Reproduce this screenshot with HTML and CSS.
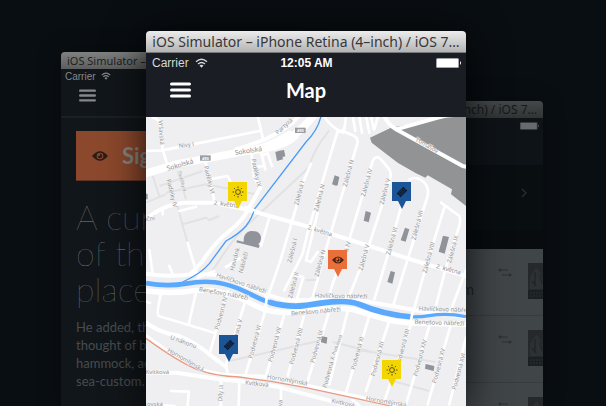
FILE: index.html
```html
<!DOCTYPE html>
<html lang="en">
<head>
<meta charset="utf-8">
<meta name="viewport" content="width=device-width, initial-scale=1">
<title>Map</title>
<link rel="stylesheet" href="styles.css">
</head>
<body>
<svg width="0" height="0" class="defs" aria-hidden="true">
  <symbol id="wifi" viewBox="0 0 14 11"><path d="M1 4.2Q7-1.2 13 4.2M3.2 6.6Q7 3.2 10.8 6.6" fill="none" stroke="currentColor" stroke-width="1.6"/><path d="M4.8 8.2Q7 6.4 9.2 8.2L7 10.6z" fill="currentColor"/></symbol>
  <symbol id="battery" viewBox="0 0 25 10"><rect width="23" height="10" rx="1.5" fill="currentColor" opacity=".6"/><rect x="1" y="1" width="21" height="8" rx=".5" fill="currentColor"/><path d="M24 3q2 2 0 4z" fill="currentColor"/></symbol>
  <symbol id="menu" viewBox="0 0 21 16"><path d="M1.5 2h18M1.5 8h18M1.5 14h18" stroke="currentColor" stroke-width="3" stroke-linecap="round"/></symbol>
  <symbol id="eye" viewBox="0 0 16 10"><path d="M0 5Q8-4.6 16 5Q8 14.6 0 5z" fill="currentColor"/><circle cx="8" cy="5" r="3.3" fill="var(--hole)"/><circle cx="8" cy="5" r="2.2" fill="currentColor"/><path d="M8 5V2.8A2.2 2.2 0 0 0 5.8 5z" fill="var(--hole)"/></symbol>
  <symbol id="sun" viewBox="0 0 12 12"><circle cx="6" cy="6" r="2.4" fill="none" stroke="currentColor"/><path d="M6 .5v1.6M6 9.9v1.6M.5 6h1.6M9.9 6h1.6M2.1 2.1l1.1 1.1M8.8 8.8l1.1 1.1M2.1 9.9l1.1-1.1M8.8 3.2l1.1-1.1" stroke="currentColor"/></symbol>
  <symbol id="ticket" viewBox="0 0 12 12"><g transform="rotate(-45 6 6)"><path d="M1.2 3.2h9.6v1.9a1 1 0 0 0 0 1.8v1.9H1.2V6.9a1 1 0 0 0 0-1.8z" fill="currentColor"/><path d="M3.4 4.5h5.2v3H3.4zM4.7 6h2.6" fill="none" stroke="#1b5497" stroke-width=".4"/></g></symbol>
  <symbol id="swap" viewBox="0 0 14 9"><path d="M2 2h8M4 7h8" stroke="currentColor"/><path d="M0 2l3-2v4zM14 7l-3-2v4z" fill="currentColor"/></symbol>
  <symbol id="portrait" viewBox="0 0 27 36"><rect width="27" height="36" fill="#25292c"/><path d="M2 26Q1 12 6 8q3-6 5 0 5 5 4 18zM15 26q-1-14 4-18 4-4 6 2l2 16z" fill="#2c3134"/><path d="M7 9v14M19 9v13M4 18l4 5M12 12l2 9" stroke="#222629" stroke-width="1.5"/><path d="M0 27h27v9H0z" fill="#1b2023"/><path d="M2 30h23M2 33h20" stroke="#2a2f32" stroke-dasharray="2 1"/></symbol>
</svg>
<main class="desktop">

  <section class="sim sim-left">
    <div class="titlebar"><span>iOS Simulator – iPhone</span></div>
    <header class="head">
      <div class="status"><span>Carrier</span><svg class="wifi"><use href="#wifi"/></svg></div>
      <button class="menu" aria-label="Menu"><svg><use href="#menu"/></svg></button>
    </header>
    <div class="article">
      <button class="sign"><svg class="eye"><use href="#eye"/></svg>Sign in</button>
      <h2>A cur<br>of the<br>place</h2>
      <p>He added, the<br>thought of by<br>hammock, act<br>sea-custom.</p>
    </div>
  </section>

  <section class="sim sim-right">
    <div class="titlebar"><span>(4–inch) / iOS 7…</span></div>
    <header class="head"><div class="status"><svg class="battery"><use href="#battery"/></svg></div></header>
    <div class="feature"><svg class="chevron" viewBox="0 0 6 10"><path d="M1 1l4 4-4 4" fill="none" stroke="currentColor" stroke-width="1.5"/></svg></div>
    <ul class="list">
      <li><span class="name">m</span><svg class="swap"><use href="#swap"/></svg><svg class="portrait"><use href="#portrait"/></svg></li>
      <li><svg class="swap"><use href="#swap"/></svg><svg class="portrait"><use href="#portrait"/></svg></li>
      <li><svg class="swap"><use href="#swap"/></svg><svg class="portrait"><use href="#portrait"/></svg></li>
    </ul>
  </section>

  <section class="sim sim-main">
    <div class="titlebar"><span>iOS Simulator – iPhone Retina (4–inch) / iOS 7…</span></div>
    <header class="head">
      <div class="status"><span class="carrier">Carrier<svg class="wifi"><use href="#wifi"/></svg></span><span class="time">12:05 AM</span><svg class="battery"><use href="#battery"/></svg></div>
      <div class="nav"><button class="menu" aria-label="Menu"><svg><use href="#menu"/></svg></button><h1>Map</h1></div>
    </header>
    <div class="map">
      <svg class="streets" viewBox="0 0 960 867" role="img" aria-label="Street map">
        <rect width="960" height="867" fill="#efeff1"/>
        <g class="lane">
          <path d="M20 177L40 237M40 207L170 162M95 162L120 247M60 227L180 202L330 232M0 257L60 232M95 267L110 327L125 377M110 322L180 302L190 309L220 297M250 732L480 680L530 670M560 675L700 710M640 700L870 735M740 792L850 822M480 490L510 488"/>
          <path d="M550 40Q500 100 490 150L330 300Q270 350 220 430L190 475"/>
        </g>
        <path d="M672 62L735 32L900 2L960 -3V267L915 232L918 217L845 175L838 182L810 169L755 137L677 77Z" fill="#929395"/>
        <g class="road s">
          <path d="M20 2q20 3 22 20L50 97L65 147M335 -3L350 62M0 102L50 100L340 42M175 122L190 182L205 252M190 187L245 177L255 197M315 102L325 177M345 107L358 157M350 115L365 109L378 147M325 152L350 147M50 292V277M100 282L150 269M370 302L345 387M495 140L475 187L440 307M125 377L150 462"/>
          <path d="M535 -3Q550 27 590 47M575 42L540 157L485 347M590 42L625 57Q640 67 632 87L575 277L540 397L500 540M680 132Q690 112 705 127L730 157Q738 172 730 197L665 397L605 550M680 132L610 367L560 500L545 550M790 187Q810 177 830 192Q850 207 845 237L785 427L740 570M766 267L720 432L685 547M885 257L940 297Q945 307 940 327L905 432L865 585M895 272L845 432L800 590M960 460L910 592M600 -3L595 37L573 47M620 -3L628 42M640 -3L648 47M660 -3L670 47M695 2L685 37M675 -3l8 40"/>
          <path d="M440 307L400 440L365 540M485 347L470 410L415 520M515 287L480 430L495 435L515 405M450 475L472 480L440 590M10 400L20 470M70 447L80 472M45 530Q30 592 38 597L205 647M150 527L128 622M0 554L12 558M245 522L190 712M300 547L265 657L240 742L245 772M360 532L355 592L300 767M415 592L360 777M475 592L425 777"/>
          <path d="M550 582L485 792M605 582L550 802M670 597L600 827M730 612L660 822M795 622L715 852M850 627L780 862M915 622L845 862M960 662L910 862M225 792V867M280 797L278 867M405 812V867M75 822L128 824L125 867M0 862L85 867M640 865L620 850M240 450L280 425"/>
        </g>
        <g class="road m">
          <path d="M0 307Q50 262 120 257L200 257L300 277L480 327L670 387L800 429L960 477M325 177L343 212Q330 237 310 272Q290 312 250 342T170 432L135 470M270 97Q380 67 440 17L460 -5M0 617Q40 647 100 657Q150 677 190 712L240 750M715 -3Q725 22 750 37L950 147L965 150M750 37L900 -5M0 767L90 767L220 787L300 794L400 810L480 832L630 872"/>
          <path d="M0 470Q70 482 150 470L215 474Q270 492 360 532L420 550L480 550Q580 527 680 557L740 567L820 582L960 600M0 657Q100 732 170 760Q230 777 300 777L370 780L480 805L760 867"/>
        </g>
        <path class="road l" d="M0 522Q80 532 150 520L200 520Q270 532 330 567Q370 587 430 587L480 582Q580 567 630 580Q700 602 750 614L800 618L960 622"/>
        <path class="road xl" d="M0 169L90 142L180 125L300 102Q400 87 440 57T510 -13"/>
        <path d="M230 106Q330 100 430 40L460 60Q420 105 300 113z" fill="#fff"/>
        <path class="water brook" d="M525 -2Q515 40 480 75L325 277Q320 300 300 327Q280 350 240 372L190 440Q165 470 110 495"/>
        <path class="road s" d="M155 482L205 462M300 270L345 288"/>
        <path class="water" d="M0 498Q60 510 120 500C190 487 230 498 270 512S340 550 375 557" stroke-width="14"/>
        <path class="water" d="M370 556Q430 573 480 565C540 556 600 546 640 562C700 588 750 596 800 600" stroke-width="17"/>
        <path class="water" d="M730 592Q800 605 850 596T960 599" stroke-width="10"/>
        <path d="M363 537L357 582M799 586L795 612" stroke="#fff" stroke-width="8"/>
        <path d="M0 664Q100 737 160 760Q210 777 280 780L380 794L480 812L740 868" fill="none" stroke="#e79b83" stroke-width="4"/>
        <g fill="#90939a">
          <path d="M388 105l18-5 5 27-18 5zM406 101l8-3 4 20-8 2zM0 229l5 3v15H0zM570 206l-12-4 8-27 14 5-5 25zM653 311l6-29 16 5-7 29zM764 370l13-38 13 5-11 37zM878 404l13-48 18 4-13 50zM526 658l18 3-2 19-17-4zM724 495l10-33 13 4-8 34zM837 755l2-14 26 6-2 15z"/>
          <path d="M273 370l20 5q-2-28 20-33 32-2 32 23-1 12-8 16l4 5-3 7-67-17z"/>
        </g>
        <g fill="#999da1"><rect x="162" y="115" width="32" height="16"/><rect x="447" y="32" width="32" height="16"/></g>
        <g class="shield"><text x="178" y="128">490</text><text x="463" y="45">490</text></g>
        <g class="names">
          <text transform="translate(40 47) rotate(86)">Vršavská</text>
          <text transform="translate(122 90) rotate(-8)">Nivy I</text>
          <text class="big" transform="translate(104 150) rotate(-16)">Sokolská</text>
          <text class="big" transform="translate(308 108) rotate(-8)">Sokolská</text>
          <text transform="translate(418 32) rotate(-43)">Partyzá</text>
          <text transform="translate(184 190) rotate(76)">Padělky VI</text>
          <text transform="translate(325 168) rotate(78)">Padělky IX</text>
          <text transform="translate(72 230) rotate(76)">Padělky IV</text>
          <text class="small" transform="translate(104 194) rotate(76)">Padělky V</text>
          <text transform="translate(240 268) rotate(7)">2. května</text>
          <text transform="translate(5 312) rotate(-8)">Luční</text>
          <text transform="translate(466 230) rotate(-75)">Zálešná I</text>
          <text transform="translate(526 244) rotate(-75)">Zálešná N</text>
          <text transform="translate(613 170) rotate(-75)">Zálešná N</text>
          <text transform="translate(668 198) rotate(-75)">Zálešná IV</text>
          <text transform="translate(723 225) rotate(-75)">Zálešná V</text>
          <text transform="translate(743 374) rotate(-75)">Zálešná VI</text>
          <text transform="translate(820 326) rotate(-75)">Zálešná VII</text>
          <text transform="translate(926 398) rotate(-75)">Zálešná IX</text>
          <text transform="translate(854 423) rotate(-75)">Zálešná VIII</text>
          <text transform="translate(445 402) rotate(-75)">Zálešná I</text>
          <text transform="translate(448 506) rotate(-75)">Zálešná II</text>
          <text transform="translate(528 440) rotate(-75)">Zálešná N</text>
          <text transform="translate(660 423) rotate(-75)">Zálešná V</text>
          <text transform="translate(610 390) rotate(-75)">á IV</text>
          <text transform="translate(840 90) rotate(30)">Tomášov</text>
          <text transform="translate(520 347) rotate(17)">2. května</text>
          <text transform="translate(906 463) rotate(15)">2. května</text>
          <text transform="translate(272 428) rotate(-75)">Havránk</text>
          <text transform="translate(298 438) rotate(-75)">Nábřeží</text>
          <text transform="translate(284 504) rotate(19)">Havlíčkovo nábřeží</text>
          <text transform="translate(232 535) rotate(10)">Benešovo nábřeží</text>
          <text transform="translate(585 543) rotate(1)">Havlíčkovo nábřeží</text>
          <text transform="translate(510 589) rotate(-5)">Benešovo nábřeží</text>
          <text transform="translate(897 583) rotate(2)">Havlíčkovo nábřeží</text>
          <text transform="translate(880 623) rotate(2)">Benešovo nábřeží</text>
          <text transform="translate(231 590) rotate(-75)">Podvesná IV</text>
          <text transform="translate(282 635) rotate(-75)">esná V</text>
          <text transform="translate(332 676) rotate(-75)">Podvesná VI</text>
          <text transform="translate(392 684) rotate(-75)">Podvesná VII</text>
          <text transform="translate(456 689) rotate(-75)">Podvesná VIII</text>
          <text transform="translate(518 690) rotate(-75)">Podvesná IX</text>
          <text transform="translate(554 767) rotate(-75)">Podvesná X</text>
          <text class="small" transform="translate(578 685) rotate(-70)">Podvesná</text>
          <text transform="translate(640 710) rotate(-75)">Podvesná XI</text>
          <text transform="translate(700 727) rotate(-75)">Podvesná XII</text>
          <text transform="translate(776 692) rotate(-75)">Podvesná XIII</text>
          <text transform="translate(828 724) rotate(-75)">Podvesná XIV</text>
          <text transform="translate(884 748) rotate(-75)">Podvesná XV</text>
          <text transform="translate(944 765) rotate(-75)">Podvesná XVI</text>
          <text transform="translate(110 680) rotate(20)">U náhonu</text>
          <text transform="translate(116 734) rotate(30)">Hornomlýnská</text>
          <text transform="translate(34 770)">Kvítková</text>
          <text transform="translate(332 806) rotate(6)">Kvítková</text>
          <text transform="translate(423 795) rotate(10)">Hornomlýnská</text>
          <text transform="translate(720 860) rotate(10)">Hornomlýnská</text>
          <text transform="translate(590 864) rotate(12)">Kvítková</text>
          <text transform="translate(230 828) rotate(-86)">Díly III</text>
          <text transform="translate(22 867)">kovská</text>
          <text transform="translate(409 858) rotate(-86)">va</text>
        </g>
      </svg>
      <button class="pin sunny p1" aria-label="Weather"><svg><use href="#sun"/></svg></button>
      <button class="pin event p2" aria-label="Event"><svg><use href="#ticket"/></svg></button>
      <button class="pin sight p3" aria-label="Sight"><svg><use href="#eye"/></svg></button>
      <button class="pin event p4" aria-label="Event"><svg><use href="#ticket"/></svg></button>
      <button class="pin sunny p5" aria-label="Weather"><svg><use href="#sun"/></svg></button>
    </div>
  </section>
</main>
</body>
</html>
```

FILE: styles.css
```css
* { box-sizing: border-box; }
body { margin: 0; background: #090e12; font-family: Lato, sans-serif; }
button { border: 0; padding: 0; background: none; color: inherit; font: inherit; }
svg { display: block; }
h1, h2, p, ul { margin: 0; padding: 0; }
.defs { position: absolute; }
.desktop { position: relative; height: 100vh; overflow: hidden; }

/* simulator windows, placed freely on the desktop */
.sim { position: absolute; bottom: 0; overflow: hidden; border-radius: 4px 4px 0 0; display: flex; flex-direction: column; }
.sim-main { top: 31px; left: calc(50% - 157px); width: 320px; box-shadow: 0 4px 40px rgba(0, 0, 0, .8); }
.sim-left { top: 52px; left: calc(50% - 242px); width: 267px; background: #11161a; box-shadow: 0 0 24px rgba(0, 0, 0, .3); }
.sim-right { top: 101px; left: calc(50% - 27px); width: 267px; background: #090e11; box-shadow: 0 0 24px rgba(0, 0, 0, .2); }

.titlebar { flex: none; display: flex; align-items: center; height: 17px; padding: 0 6px; white-space: nowrap; font: 12px "Noto Sans", sans-serif; }
.sim-main .titlebar { justify-content: center; height: 22px; font-size: 14px; color: #38383a; background: linear-gradient(#ececec, #b4b4b4); border-bottom: 1px solid #77797b; }
.sim-left .titlebar { font-size: 11px; color: #1d1f20; background: linear-gradient(#808282, #5c5e5e); }
.sim-right .titlebar { justify-content: flex-end; color: #15191b; background: linear-gradient(#454849, #303435); }

.status { display: flex; align-items: center; font-family: "Liberation Sans", sans-serif; }
.wifi { width: 13px; height: 10px; }
.battery { width: 25px; height: 10px; }
.menu { display: block; }
.menu svg { width: 21px; height: 16px; }

.sim-main .head { flex: none; height: 64px; background: #1a1e24; color: #fff; }
.sim-main .status { height: 20px; padding: 0 5px 0 6px; font-size: 12px; display: grid; grid-template-columns: 1fr auto 1fr; }
.carrier { display: flex; align-items: center; gap: 6px; color: #d6d8da; }
.time { font-weight: bold; }
.sim-main .battery { justify-self: end; }
.nav { display: grid; grid-template-columns: 1fr auto 1fr; align-items: center; padding: 3px 24px 0; }
.nav h1 { font-size: 20px; line-height: 28px; font-weight: 700; }

.sim-left .head { flex: none; height: 49px; border-bottom: 2px solid #1b2024; color: #85888a; }
.sim-left .status { height: 14px; padding-left: 4px; gap: 5px; font-size: 10px; margin-bottom: 6px; }
.sim-left .wifi { width: 10px; height: 8px; }
.sim-left .menu { margin-left: 18px; }
.sim-left .menu svg { width: 17px; height: 13px; }
.article { padding: 13px 15px; }
.sign { display: flex; align-items: center; gap: 14px; width: 100%; height: 50px; padding-left: 16px; background: #8b482c; border-bottom: 1px solid #623322; color: #858481; font-size: 22px; font-weight: 700; }
.eye { width: 16px; height: 10px; color: #2a1c17; --hole: #8b482c; }
.article h2 { margin-top: 18px; font-size: 34px; line-height: 36px; font-weight: 100; color: #85888b; }
.article p { margin-top: 11px; font-size: 13px; line-height: 18px; color: #484c4f; }

.sim-right .head { flex: none; height: 47px; background: #0e1317; }
.sim-right .status { height: 15px; padding-right: 4px; justify-content: flex-end; color: #686b6d; }
.sim-right .battery { width: 19px; height: 8px; }
.feature { flex: none; display: flex; justify-content: flex-end; height: 84px; padding: 23px 16px 0; border-bottom: 19px solid #080c0f; background: #090e11; color: #272c2f; }
.chevron { width: 6px; height: 10px; }
.list { list-style: none; background: #404548; }
.list li { position: relative; display: flex; justify-content: flex-end; align-items: flex-start; gap: 16px; height: 67px; padding-top: 14px; border-bottom: 1px solid #373c3f; overflow: hidden; }
.name { margin: 17px 8px 0 0; font-size: 15px; color: #202528; }
.swap { width: 14px; height: 9px; margin-top: 5px; color: #2b3033; }
.portrait { width: 27px; height: 36px; margin-right: -12px; }

.map { position: relative; flex: 1; overflow: hidden; background: #efeff1; }
.streets { width: 100%; }
.lane { fill: none; stroke: #e2e2e4; stroke-width: 6; }
.road { fill: none; stroke: #fff; stroke-linejoin: round; stroke-linecap: round; }
.s { stroke-width: 8; }
.m { stroke-width: 12; }
.l { stroke-width: 16; }
.xl { stroke-width: 23; }
.water { fill: none; stroke: #5ba9fc; }
.brook { stroke: #4a9cf8; stroke-width: 4; }
.names { font: 18px "Open Sans", sans-serif; fill: #8c8c8e; stroke: #f8f8f9; stroke-width: 2px; paint-order: stroke; text-anchor: middle; }
.names .big { font-size: 20px; }
.names .small { font-size: 14px; }
.shield { font: bold 12px "Open Sans", sans-serif; fill: #fff; text-anchor: middle; }

/* map pins */
.pin { position: absolute; display: flex; align-items: center; justify-content: center; width: 19px; height: 19px; background: var(--fill); }
.pin::after { content: ""; position: absolute; top: 100%; left: 6px; border: solid transparent; border-width: 8px 4px 0; border-top-color: var(--fill); }
.pin svg { width: 12px; height: 12px; }
.sunny { --fill: #f3d500; color: #5a5010; }
.event { --fill: #1b5497; color: #0b1c33; }
.sight { --fill: #ea6f39; --hole: #ea6f39; color: #4a2414; }
.sight svg { height: 8px; }
.p1 { left: 82px; top: 65px; }
.p2 { left: 246px; top: 65px; }
.p3 { left: 182px; top: 133px; }
.p4 { left: 73px; top: 218px; }
.p5 { left: 236px; top: 243px; }
```
